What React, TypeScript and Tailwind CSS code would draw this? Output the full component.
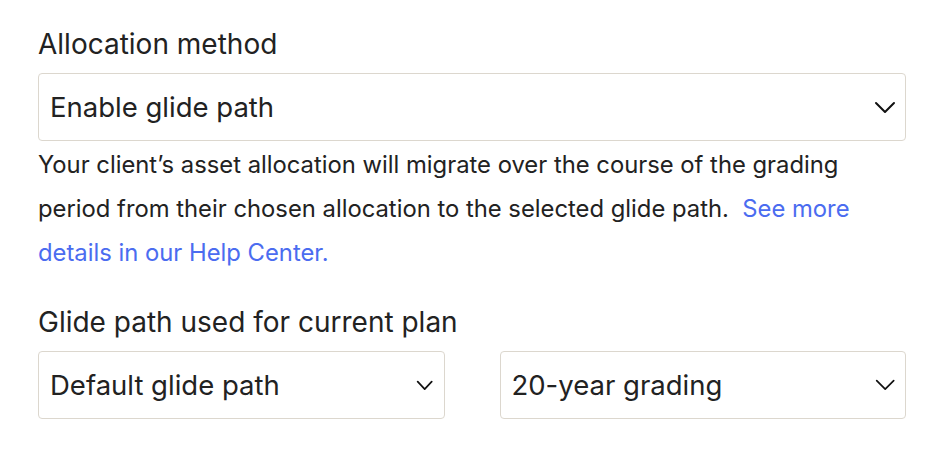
function Chevron({ width, height, stroke }: { width: number; height: number; stroke: number }) {
  return (
    <svg
      width={width + stroke * 2}
      height={height + stroke * 2}
      viewBox={`${-stroke} ${-stroke} ${width + stroke * 2} ${height + stroke * 2}`}
      fill="none"
      className="shrink-0"
    >
      <polyline
        points={`0,0 ${width / 2},${height} ${width},0`}
        stroke="#111"
        strokeWidth={stroke}
        strokeLinecap="round"
        strokeLinejoin="round"
      />
    </svg>
  );
}

function SelectBox({
  value,
  chevron,
}: {
  value: string;
  chevron: { width: number; height: number; stroke: number; right: string };
}) {
  return (
    <div className="flex h-[68px] items-center justify-between rounded-[4px] border border-[#dcd7ce] bg-white pl-[11px]">
      <span className="pt-[2px] text-[27.5px] text-[#222]">{value}</span>
      <span className={chevron.right}>
        <Chevron width={chevron.width} height={chevron.height} stroke={chevron.stroke} />
      </span>
    </div>
  );
}

export default function App() {
  return (
    <div className="min-h-screen bg-white font-['Inter','Liberation_Sans',sans-serif]">
      <div className="ml-[38px] w-[868px] pt-[26px]">
        <section className="grid gap-[11px]">
          <h2 className="text-[28px] leading-[36px] text-[#222]">Allocation method</h2>
          <SelectBox
            value="Enable glide path"
            chevron={{ width: 18, height: 9, stroke: 2, right: 'mr-[9px]' }}
          />
        </section>
        <p className="mt-[2px] text-[23.8px] leading-[44px] text-[#222]">
          Your client’s asset allocation will migrate over the course of the grading period from
          their chosen allocation to the selected glide path.{'\u00a0 '}
          <a className="text-[#4b6cf0]" href="#">
            See more details in our Help Center.
          </a>
        </p>
        <section className="mt-[29px] grid gap-[11px]">
          <h2 className="text-[28px] leading-[36px] text-[#222]">Glide path used for current plan</h2>
          <div className="grid grid-cols-2 gap-[55px]">
            <SelectBox
              value="Default glide path"
              chevron={{ width: 14, height: 7.5, stroke: 1.7, right: 'mr-[10px]' }}
            />
            <SelectBox
              value="20-year grading"
              chevron={{ width: 17, height: 8.5, stroke: 1.7, right: 'mr-[10px]' }}
            />
          </div>
        </section>
      </div>
    </div>
  );
}
